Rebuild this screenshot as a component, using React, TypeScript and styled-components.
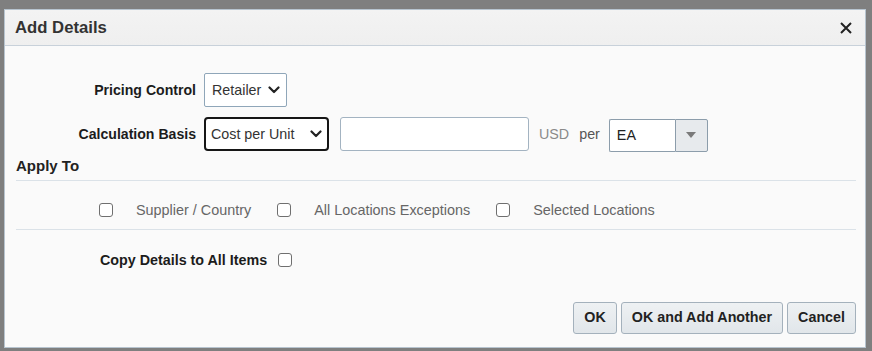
import React from "react";
import styled, { createGlobalStyle } from "styled-components";

const Global = createGlobalStyle`
  html, body { margin: 0; padding: 0; }
  body {
    background: #7f7f7f;
    font-family: "Liberation Sans", Arial, sans-serif;
    -webkit-font-smoothing: antialiased;
  }
`;

const Page = styled.div`
  width: 872px;
  height: 351px;
  box-sizing: border-box;
  padding: 9px 6px 0 4px;
  background: #7f7f7f;
  overflow: hidden;
`;

const Dialog = styled.div`
  width: 862px;
  height: 339px;
  box-sizing: border-box;
  border: 1px solid #b7c4cf;
  background: #fafafa;
  display: flex;
  flex-direction: column;
`;

const Header = styled.div`
  height: 35px;
  flex: none;
  display: flex;
  align-items: center;
  justify-content: space-between;
  padding: 0 13px 0 10px;
  background: linear-gradient(#f3f3f3, #efefef);
  border-bottom: 1px solid #c8d1da;
`;

const Title = styled.h1`
  margin: 0;
  font-size: 16.7px;
  font-weight: 700;
  color: #333;
`;

const CloseButton = styled.button`
  border: 0;
  background: none;
  padding: 0;
  width: 12px;
  height: 12px;
  display: flex;
  cursor: pointer;
`;

const Body = styled.div`
  flex: 1;
  display: flex;
  flex-direction: column;
  padding: 0 9px 13px 11px;
`;

const FormGrid = styled.div`
  margin-top: 27px;
  display: grid;
  grid-template-columns: 180px auto;
  grid-auto-rows: 34px;
  column-gap: 8px;
  row-gap: 10px;
  align-items: center;
`;

const Label = styled.label`
  text-align: right;
  font-size: 14.1px;
  font-weight: 700;
  color: #1c1c1c;
`;

const Controls = styled.div`
  display: flex;
  align-items: center;
  height: 34px;
`;

const Select = styled.div<{ $w: number; $focused?: boolean }>`
  width: ${(p) => p.$w}px;
  height: 34px;
  box-sizing: border-box;
  display: flex;
  align-items: center;
  justify-content: space-between;
  background: #fff;
  border: ${(p) => (p.$focused ? "2px solid #161616" : "1px solid #8fa6b9")};
  border-radius: ${(p) => (p.$focused ? "4px" : "2px")};
  padding: ${(p) => (p.$focused ? "0 5px 0 5px" : "0 6px 0 7px")};
  font-size: 14.3px;
  color: #333;
`;

const TextInput = styled.div`
  width: 189px;
  height: 34px;
  box-sizing: border-box;
  margin-left: 11px;
  background: #fff;
  border: 1px solid #a3b3c1;
  border-radius: 3px;
`;

const Unit = styled.span<{ $muted?: boolean }>`
  font-size: 14.3px;
  color: ${(p) => (p.$muted ? "#8a8a8a" : "#555")};
  margin-left: 10px;
`;

const Combo = styled.div`
  margin-left: 9px;
  display: flex;
  height: 33px;
  margin-top: 2px;
`;

const ComboText = styled.div`
  width: 66px;
  box-sizing: border-box;
  background: #fff;
  border: 1px solid #8c9dab;
  border-right: 0;
  border-radius: 2px 0 0 2px;
  display: flex;
  align-items: center;
  padding-left: 7px;
  font-size: 14.3px;
  color: #222;
`;

const ComboButton = styled.div`
  width: 33px;
  box-sizing: border-box;
  background: #e7eaed;
  border: 1px solid #8c9dab;
  border-radius: 0 2px 2px 0;
  display: flex;
  align-items: center;
  justify-content: center;
`;

const SectionTitle = styled.h2`
  margin: 6px 0 0;
  padding-bottom: 5px;
  font-size: 15px;
  line-height: 18px;
  font-weight: 700;
  color: #222;
  border-bottom: 1px solid #dbe2e8;
`;

const CheckRow = styled.div`
  display: flex;
  align-items: center;
  gap: 26px;
  height: 18px;
  padding: 20px 0 10px 83px;
  border-bottom: 1px solid #dbe2e8;
`;

const CheckItem = styled.label`
  display: flex;
  align-items: center;
  gap: 23px;
  font-size: 14.4px;
  color: #666;
`;

const Box = styled.span`
  width: 14px;
  height: 14px;
  box-sizing: border-box;
  border: 1px solid #6f6f6f;
  border-radius: 3px;
  background: #fff;
  flex: none;
`;

const CopyRow = styled.label`
  display: flex;
  align-items: center;
  gap: 11px;
  height: 18px;
  margin-top: 21px;
  padding-left: 84px;
  font-size: 14.3px;
  font-weight: 700;
  color: #1c1c1c;
`;

const Footer = styled.div`
  margin-top: auto;
  display: flex;
  justify-content: flex-end;
  gap: 4px;
`;

const Button = styled.button`
  height: 32px;
  padding: 0 10px 3px;
  box-sizing: border-box;
  border: 1px solid #a4b1bc;
  border-radius: 3px;
  background: linear-gradient(#eef1f3, #e1e6ea);
  font-family: "Liberation Sans", Arial, sans-serif;
  font-size: 14.3px;
  font-weight: 700;
  color: #222;
  cursor: pointer;
`;

const Chevron = () => (
  <svg width="12" height="8" viewBox="0 0 12 8">
    <path d="M1.5 1.5 L6 6 L10.5 1.5" fill="none" stroke="#222" strokeWidth="2.2" strokeLinecap="round" strokeLinejoin="round" />
  </svg>
);

export default function App() {
  return (
    <>
      <Global />
      <Page>
        <Dialog>
          <Header>
            <Title>Add Details</Title>
            <CloseButton aria-label="Close">
              <svg width="12" height="12" viewBox="0 0 12 12">
                <path d="M1 1 L11 11 M11 1 L1 11" stroke="#222" strokeWidth="2" />
              </svg>
            </CloseButton>
          </Header>
          <Body>
            <FormGrid>
              <Label>Pricing Control</Label>
              <Controls>
                <Select $w={83}>
                  <span>Retailer</span>
                  <Chevron />
                </Select>
              </Controls>
              <Label>Calculation Basis</Label>
              <Controls>
                <Select $w={125} $focused>
                  <span>Cost per Unit</span>
                  <Chevron />
                </Select>
                <TextInput />
                <Unit $muted>USD</Unit>
                <Unit>per</Unit>
                <Combo>
                  <ComboText>EA</ComboText>
                  <ComboButton>
                    <svg width="10" height="6" viewBox="0 0 10 6">
                      <path d="M0 0 H10 L5 6 Z" fill="#7a7a7a" />
                    </svg>
                  </ComboButton>
                </Combo>
              </Controls>
            </FormGrid>
            <SectionTitle>Apply To</SectionTitle>
            <CheckRow>
              <CheckItem>
                <Box />
                Supplier / Country
              </CheckItem>
              <CheckItem>
                <Box />
                All Locations Exceptions
              </CheckItem>
              <CheckItem>
                <Box />
                Selected Locations
              </CheckItem>
            </CheckRow>
            <CopyRow>
              Copy Details to All Items
              <Box />
            </CopyRow>
            <Footer>
              <Button>OK</Button>
              <Button>OK and Add Another</Button>
              <Button>Cancel</Button>
            </Footer>
          </Body>
        </Dialog>
      </Page>
    </>
  );
}
